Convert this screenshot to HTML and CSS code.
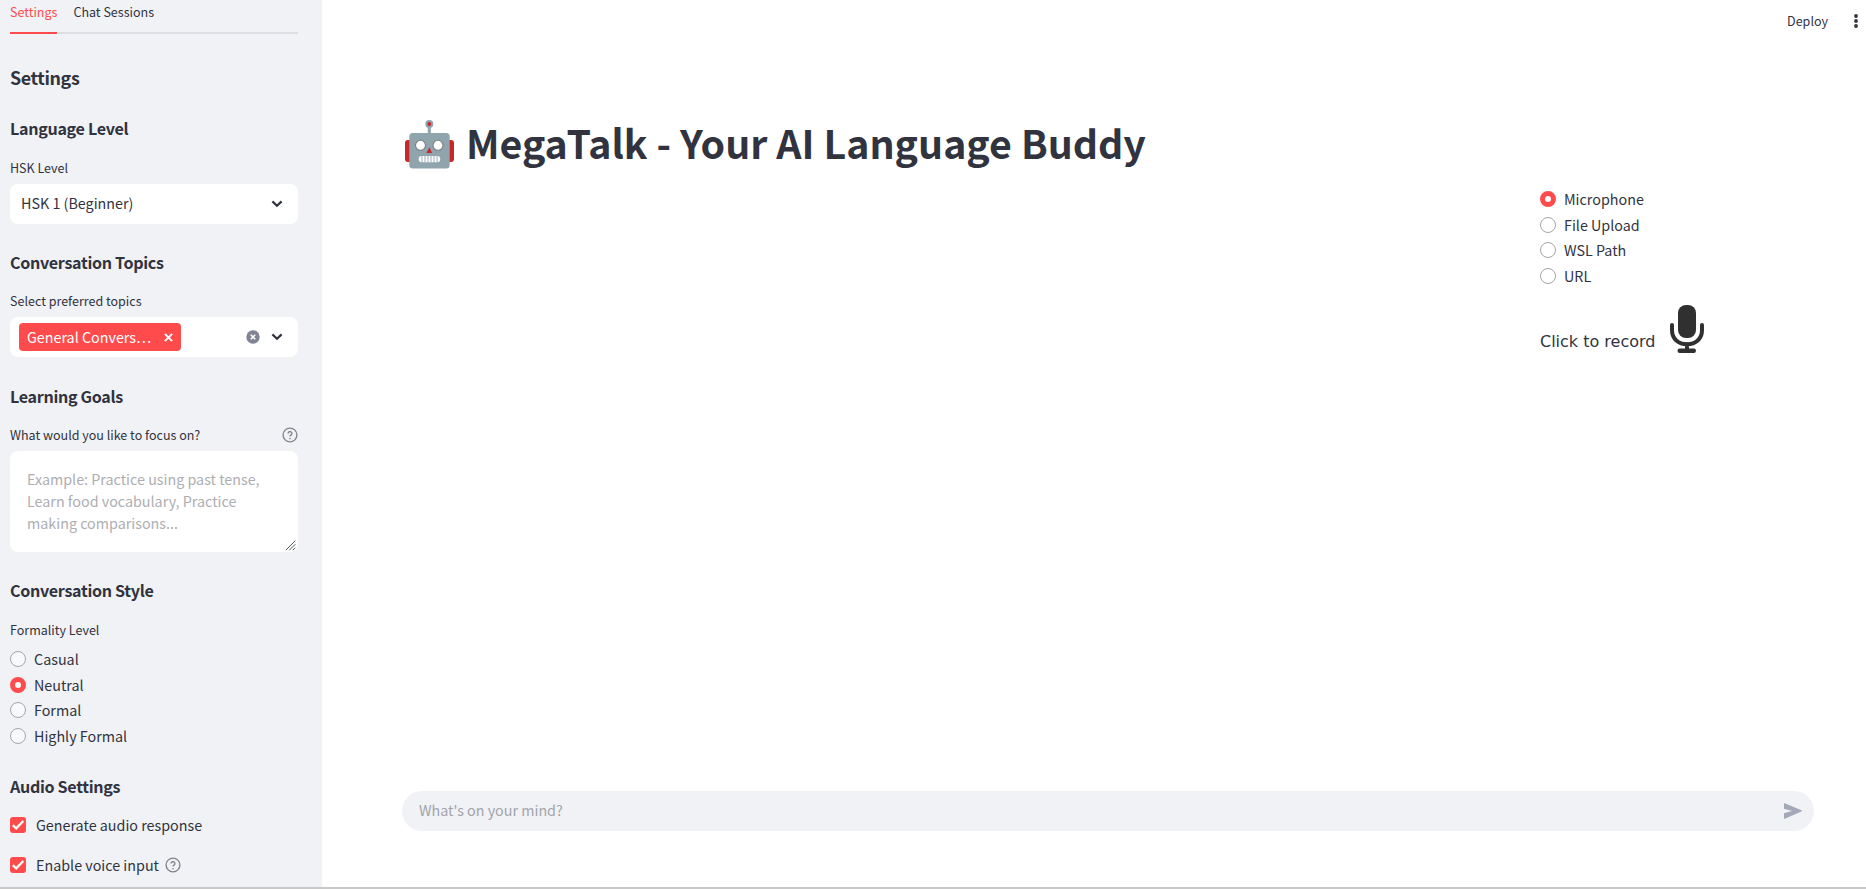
FILE: index.html
```html
<!DOCTYPE html>
<html lang="en">
<head>
<meta charset="utf-8">
<title>MegaTalk</title>
<link rel="stylesheet" href="styles.css">
</head>
<body>
<div class="app">
  <aside class="sidebar">
    <nav class="tabs"><span class="tab active">Settings</span><span class="tab">Chat Sessions</span></nav>
    <h2 class="title">Settings</h2>
    <section class="group first">
      <h3 class="heading">Language Level</h3>
      <div class="label">HSK Level</div>
      <div class="select"><span class="value">HSK 1 (Beginner)</span>
        <svg class="chevron" viewBox="0 0 12 8"><path d="M1.4 1.4 6 5.7l4.6-4.3" /></svg></div>
    </section>
    <section class="group">
      <h3 class="heading">Conversation Topics</h3>
      <div class="label">Select preferred topics</div>
      <div class="select multi">
        <span class="tag"><span class="tag-text">General Convers…</span><svg class="tag-x" viewBox="0 0 8 8"><path d="M.8.8l6.4 6.4M7.2.8.8 7.2"/></svg></span>
        <svg class="clear" viewBox="0 0 14 14"><circle cx="7" cy="7" r="6.7"/><path d="M4.8 4.8l4.4 4.4M9.2 4.8l-4.4 4.4"/></svg>
        <svg class="chevron" viewBox="0 0 12 8"><path d="M1.4 1.4 6 5.7l4.6-4.3" /></svg></div>
    </section>
    <section class="group goals">
      <h3 class="heading">Learning Goals</h3>
      <div class="label with-help"><span>What would you like to focus on?</span>
        <svg class="help" viewBox="0 0 16 16"><circle cx="8" cy="8" r="6.9"/><path d="M6.1 6.5a1.9 1.9 0 1 1 2.9 1.6C8.3 8.5 8 8.8 8 9.6M8 11v1.3"/></svg></div>
      <div class="area">Example: Practice using past tense,<br>Learn food vocabulary, Practice<br>making comparisons...
        <svg class="grip" viewBox="0 0 12 11"><path d="M.8 10.2 10.3.7M4.3 10.2l6-6M7.8 10.2l2.5-2.5"/></svg></div>
    </section>
    <section class="group">
      <h3 class="heading">Conversation Style</h3>
      <div class="label formality">Formality Level</div>
      <div class="radios">
        <div class="radio"><i class="dot"></i><span>Casual</span></div>
        <div class="radio"><i class="dot on"></i><span>Neutral</span></div>
        <div class="radio"><i class="dot"></i><span>Formal</span></div>
        <div class="radio"><i class="dot"></i><span>Highly Formal</span></div>
      </div>
    </section>
    <section class="group audio">
      <h3 class="heading">Audio Settings</h3>
      <div class="check"><svg class="box" viewBox="0 0 16 16"><rect width="16" height="16" rx="3"/><path d="M2.8 8.2 6.2 11.3 13.3 4"/></svg><span>Generate audio response</span></div>
      <div class="check"><svg class="box" viewBox="0 0 16 16"><rect width="16" height="16" rx="3"/><path d="M2.8 8.2 6.2 11.3 13.3 4"/></svg><span>Enable voice input</span>
        <svg class="help" viewBox="0 0 16 16"><circle cx="8" cy="8" r="6.9"/><path d="M6.1 6.5a1.9 1.9 0 1 1 2.9 1.6C8.3 8.5 8 8.8 8 9.6M8 11v1.3"/></svg></div>
    </section>
  </aside>
  <main class="main">
    <header class="top"><span>Deploy</span><svg class="dots" viewBox="0 0 4 14"><circle cx="2" cy="2" r="1.9"/><circle cx="2" cy="7" r="1.9"/><circle cx="2" cy="12" r="1.9"/></svg></header>
    <h1 class="hero">
      <svg class="robot" viewBox="0 0 49 49">
        <rect x="0" y="20" width="10" height="22" rx="3" fill="#c62828"/><rect x="39" y="20" width="10" height="22" rx="3" fill="#c62828"/>
        <path d="M24.3 5v9" stroke="#90a4ae" stroke-width="3"/>
        <circle cx="24.3" cy="4" r="4" fill="#90a4ae"/><circle cx="24.3" cy="4" r="1.9" fill="#c62828"/>
        <rect x="4.3" y="13" width="40.4" height="35.5" rx="3.5" fill="#90a4ae"/>
        <g fill="#fff" stroke="#78807f" stroke-width="1.1"><circle cx="15.5" cy="25.3" r="5"/><circle cx="33" cy="25.3" r="5"/></g>
        <path d="M24.3 27.3 27.2 33h-5.8z" fill="#c62828"/>
        <rect x="13.7" y="36" width="21.5" height="6.3" rx="3" fill="#fff"/>
        <path d="M17 36v6.3M20 36v6.3M23 36v6.3M26 36v6.3M29 36v6.3M32 36v6.3" stroke="#90a4ae" stroke-width=".9"/>
      </svg>
      <span>MegaTalk - Your AI Language Buddy</span></h1>
    <div class="recorder">
      <div class="radios">
        <div class="radio"><i class="dot on"></i><span>Microphone</span></div>
        <div class="radio"><i class="dot"></i><span>File Upload</span></div>
        <div class="radio"><i class="dot"></i><span>WSL Path</span></div>
        <div class="radio"><i class="dot"></i><span>URL</span></div>
      </div>
      <div class="record"><span>Click to record</span>
        <svg class="mic" viewBox="0 0 34 48"><rect x="8" y="0" width="18" height="33" rx="8"/><rect x="7.5" y="43.5" width="18.5" height="4.5" rx="2.2"/><path d="M2 20v5c0 9 6.5 14.2 15 14.2S32 34 32 25v-5M17 39v6"/></svg></div>
    </div>
    <div class="chat"><span>What's on your mind?</span>
      <svg class="send" viewBox="0 0 18 16"><path d="M0 .6Q0 0 .8.2L17.4 7.3Q18.3 8 17.4 8.6L.8 15.8Q0 16 0 15.4V10.2L8 8 0 5.8z"/></svg></div>
  </main>
</div>
</body>
</html>
```
FILE: styles.css
```css
* { box-sizing: border-box; }
body { margin: 0; background: #fff; color: #31333f; font: 14.32px/24px "Noto Sans CJK SC", "Open Sans", sans-serif; white-space: nowrap; }
svg { display: block; flex: none; fill: none; }
h1, h2, h3 { margin: 0; }
.app { display: flex; width: 1866px; height: 889px; overflow: hidden; border-bottom: 2px solid #c8c8c8; }
.sidebar { width: 322px; flex: none; padding: 0 24px 0 10px; background: #f0f2f6; }
.tabs { display: flex; gap: 16px; height: 34px; font-size: 12.53px; line-height: 23px; box-shadow: inset 0 -2px #dcdee3; }
.tab { height: 34px; }
.active { color: #ff4b4b; border-bottom: 2px solid #ff4b4b; }
.title { margin-top: 31px; font-size: 17.9px; line-height: 24px; font-weight: 600; letter-spacing: -.38px; }
.heading { font-size: 16.1px; line-height: 24px; font-weight: 600; letter-spacing: -.32px; }
.group { margin-top: 26px; }
.first { margin-top: 27px; }
.goals { margin-top: 27px; }
.label { margin: 17px 0 6px; height: 20px; line-height: 20px; font-size: 12.53px; }
.first .label { margin-top: 18px; }
.with-help { display: flex; justify-content: space-between; align-items: center; }
.formality { margin: 18px 0 6.3px; }
.help { width: 16px; height: 16px; stroke: #83858d; stroke-width: 1.4; }
.select { display: flex; align-items: center; height: 40px; padding: 0 15px 0 11px; border-radius: 8px; background: #fff; }
.value { flex: 1; padding-bottom: 2px; }
.chevron { width: 12px; height: 8px; stroke: #31333f; stroke-width: 2.2; }
.multi { padding-left: 9px; }
.tag { display: flex; align-items: center; justify-content: space-between; width: 162px; height: 28px; padding: 0 8px 0 8px; border-radius: 4px; background: #ff4b4b; color: #fff; }
.tag-x { width: 9px; height: 9px; stroke: #fff; stroke-width: 1.7; }
.clear { width: 14px; height: 14px; margin: 0 11px 0 auto; }
.clear circle { fill: #808495; }
.clear path { stroke: #fff; stroke-width: 1.6; }
.area { position: relative; height: 101px; padding: 17px; border-radius: 8px; background: #fff; color: #adaeb2; line-height: 22.1px; }
.grip { position: absolute; right: 1px; bottom: 1px; width: 12px; height: 11px; stroke: #555; stroke-width: 1; }
.radios { height: 102px; }
.radio { display: flex; align-items: center; height: 25.6px; gap: 8px; }
.dot { width: 16px; height: 16px; flex: none; border: 1px solid #a5a6ac; border-radius: 50%; background: #f9f9fb; }
.dot.on { border: 5px solid #ff4b4b; background: #fff; }
.recorder .dot:not(.on) { background: #fff; }
.audio { margin-top: 25.7px; }
.check { display: flex; align-items: center; gap: 10px; height: 24px; margin-top: 16px; }
.heading + .check { margin-top: 15px; }
.check .help { margin-left: -4px; }
.box { width: 16px; height: 16px; }
.box rect { fill: #ff4b4b; }
.box path { stroke: #fff; stroke-width: 2.3; }
.main { flex: 1; display: flex; flex-direction: column; padding: 0 52px 0 80px; }
.top { display: flex; align-items: center; justify-content: flex-end; gap: 26px; height: 42px; margin-right: -44px; font-size: 12.53px; }
.dots { width: 4px; height: 14px; fill: #31333f; }
.hero { display: flex; align-items: center; gap: 12px; height: 60px; margin-top: 72px; padding-left: 3px; font-size: 39.34px; line-height: 60px; font-weight: 700; }
.hero span { padding-bottom: 4px; }
.robot { width: 49px; height: 49px; }
.recorder { width: 274px; margin: 12.3px 0 0 1138px; }
.record { display: flex; align-items: flex-end; gap: 15px; height: 48px; margin-top: 17px; font: 16px/23px "DejaVu Sans", sans-serif; }
.mic { width: 34px; height: 48px; fill: #303030; }
.mic path { fill: none; stroke: #303030; stroke-width: 4; stroke-linecap: round; }
.chat { display: flex; align-items: center; justify-content: space-between; height: 40px; margin: auto 0 56px; padding: 0 12px 0 17px; border-radius: 20px; background: #f0f2f6; color: #a2a4aa; }
.chat span { padding-bottom: 2px; }
.send { width: 18px; height: 16px; fill: #a3a8b8; }
```
